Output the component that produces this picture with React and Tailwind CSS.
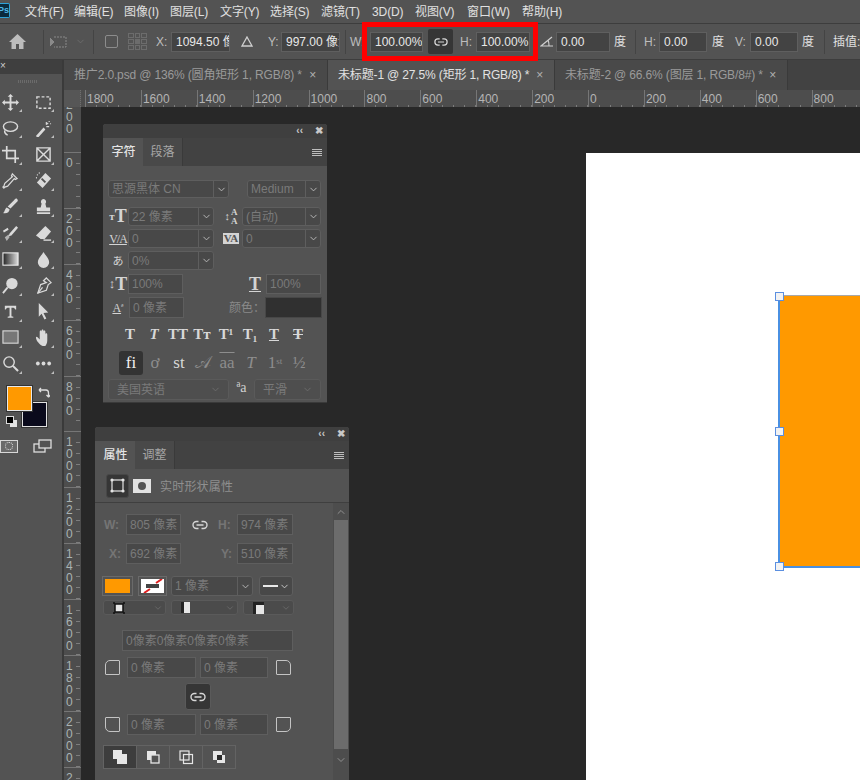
import { ChevronDown, ChevronUp } from 'lucide-react';

const MENUS = ['文件(F)', '编辑(E)', '图像(I)', '图层(L)', '文字(Y)', '选择(S)', '滤镜(T)', '3D(D)', '视图(V)', '窗口(W)', '帮助(H)'];
const MENU_W = ['w-[49px]', 'w-[50px]', 'w-[46px]', 'w-[50px]', 'w-[50px]', 'w-[51px]', 'w-[51px]', 'w-[43px]', 'w-[52px]', 'w-[55px]', 'w-[50px]'];

const H_RULER = ['1800', '1600', '1400', '1200', '1000', '800', '600', '400', '200', '0', '200', '400', '600', '800'];
const V_RULER = ['0', '200', '400', '600', '800', '1000', '1200', '1400', '1600', '1800', '2000', '2200'];

const stroke = { fill: 'none', stroke: 'currentColor', strokeWidth: 1.5 };

function Ico({ size = 18, children, className = '' }) {
  return <svg width={size} height={size} viewBox="0 0 18 18" className={className} fill="currentColor">{children}</svg>;
}

const TOOLS = [
  <path d="M9 0l3 3h-2v5h5V6l3 3-3 3v-2h-5v5h2l-3 3-3-3h2v-5H3v2L0 9l3-3v2h5V3H6z" />,
  <g {...stroke}><path strokeDasharray="3 2" d="M2 3h14v12H2z" /></g>,
  <g {...stroke}><ellipse cx="9" cy="7" rx="7.500" ry="5" /><path d="M3 11c-1 3 1 4 3 5" /></g>,
  <g><path d="M1 17l8-9 2 2-8 9z" /><path d="M12 2v3M14 3l-2 2M15 7h-3M15 1v1M17 4h-1" {...stroke} strokeWidth="1.2" /></g>,
  <g {...stroke} strokeWidth="1.8"><path d="M0 5h14v13M5 0v13h13" /></g>,
  <g {...stroke}><path d="M2 2h14v14H2zM2 2l14 14M16 2L2 16" /></g>,
  <g {...stroke} strokeWidth="1.3"><path d="M11 2l5 5-2 1-1-1-7 8-3 1-1 1-1-1 1-1 1-3 8-7-1-1z" /></g>,
  <g><path d="M11 1l6 6-9 10-6-6z" /><path d="M7 7l4 4" stroke="#535353" strokeWidth="2" /><path d="M2 3h1M4 1h1M1 6h1" {...stroke} /></g>,
  <path d="M16 1c1 1 1 2 0 3l-7 7-3-2 7-7c1-1 2-2 3-1zM5 10l3 2c0 3-3 5-7 4 2-1 2-5 4-6z" />,
  <path d="M9 1a3 3 0 0 1 2 5l1 4h4v4H2v-4h4l1-4a3 3 0 0 1 2-5zM2 15h14v2H2z" />,
  <g><path d="M15 1l2 2-7 8-3 1 1-3zM1 6l5-3 1 2-5 3z" /><path d="M3 13l4-3 1 3-3 4z" opacity=".7" /></g>,
  <g><path d="M11 1l6 6-7 8H6l-5-4z" /><path d="M1 11l5 4h4l-1 1H5z" fill="#535353" /><path d="M9 16h8" {...stroke} /></g>,
  <g><defs><linearGradient id="gr"><stop offset="0" stopColor="#222" /><stop offset="1" stopColor="#ddd" /></linearGradient></defs><rect x="1" y="2" width="16" height="13" fill="url(#gr)" stroke="#e8e8e8" strokeWidth="1.2" /></g>,
  <path d="M9 1c3 5 6 7 6 11a6 6 0 0 1-12 0c0-4 3-6 6-11z" />,
  <g><circle cx="10.500" cy="7" r="6" /><path d="M6 11l-5 6" {...stroke} strokeWidth="2" /></g>,
  <g {...stroke} strokeWidth="1.3"><path d="M12 1l5 5-3 2-2 6-9 3 3-9 6-2-3-2z" /><path d="M3 17l5-6" /></g>,
  <path d="M3 3h12v4h-1c-.5-1.500-1-2-3-2h-1v9l2 .5v1H6v-1l2-.5V5H7c-2 0-2.500.5-3 2H3z" />,
  <path d="M4 0l10 10-5 .5 3 6-2 1-3-6-3 3z" />,
  <rect x="1" y="2" width="16" height="13" fill="#777" stroke="#d8d8d8" strokeWidth="1.2" />,
  <path d="M6 17c-2-2-5-5-5-8 0-1 1-1 2 0l2 2V3c0-2 2-2 2 0v4V2c0-2 2-2 2 0v5-4c0-2 2-2 2 0v5-2c0-2 2-2 2 0v6c0 4-2 6-3 7z" />,
  <g {...stroke}><circle cx="7.500" cy="7.500" r="5.500" /><path d="M11.500 11.500L17 17" strokeWidth="2.2" /></g>,
  <g><circle cx="3" cy="9" r="2" /><circle cx="9" cy="9" r="2" /><circle cx="15" cy="9" r="2" /></g>,
];

const CHAR_STYLES = ['T', 'T', 'TT', 'Tт', 'T¹', 'T₁', 'T', 'T'];
const OPEN_TYPE = ['fi', 'ơ', 'st', '𝒜', 'aa', 'T', <span key="st">1<sup className="text-[9px]">st</sup></span>, '½'];

function Label({ children, className = '' }) {
  return <span className={`text-[12px] leading-none text-[#bdbdbd] shrink-0 ${className}`}>{children}</span>;
}

function OptInput({ children, className = '' }) {
  return (
    <div className={`h-[20px] bg-[#434343] border border-[#5f5f5f] px-[4px] text-[12px] leading-[18px] text-[#e8e8e8] overflow-hidden whitespace-nowrap shrink-0 ${className}`}>
      {children}
    </div>
  );
}

function Sep({ className = '' }) {
  return <div className={`w-px h-[24px] bg-[#444444] shrink-0 ${className}`} />;
}

// dim field used in both floating panels
function Field({ children, className = '', arrow = false, rounded = false, dimArrow = false }) {
  return (
    <div className={`flex h-full bg-[#484848] border border-[#5e5e5e] text-[12px] text-[#7a7a7a] whitespace-nowrap overflow-hidden shrink-0 ${rounded ? 'rounded-[3px]' : ''} ${className}`}>
      <span className="flex-1 px-[3px] flex items-center overflow-hidden">{children}</span>
      {arrow && (
        <span className={`w-[15px] flex items-center justify-center ${dimArrow ? 'text-[#6c6c6c]' : 'border-l border-[#5e5e5e] text-[#bdbdbd]'}`}>
          <ChevronDown size={11} />
        </span>
      )}
    </div>
  );
}

function PanelHead({ tabs }) {
  return (
    <>
      <div className="h-[14px] bg-[#3f3f3f] flex items-center justify-end gap-[12px] pr-[4px] text-[#c8c8c8] text-[10px] leading-none font-bold">
        <span>‹‹</span>
        <span>✖</span>
      </div>
      <div className="h-[28px] bg-[#424242] flex items-stretch">
        <div className="w-[40px] bg-[#535353] flex items-center justify-center text-[12px] text-[#e4e4e4] font-medium pl-[1px]">{tabs[0]}</div>
        <div className="w-[40px] bg-[#494949] border-r border-[#3a3a3a] flex items-center justify-center text-[12px] text-[#a6a6a6]">{tabs[1]}</div>
        <div className="flex-1 flex items-center justify-end pr-[5px]">
          <div className="w-[10px] flex flex-col gap-[1px]">
            <i className="block h-px bg-[#bdbdbd]" /><i className="block h-px bg-[#bdbdbd]" /><i className="block h-px bg-[#bdbdbd]" /><i className="block h-px bg-[#bdbdbd]" />
          </div>
        </div>
      </div>
    </>
  );
}

function CharIcon({ children, className = '' }) {
  return <span className={`w-[20px] shrink-0 flex items-center justify-center font-['Liberation_Serif',serif] font-bold text-[#d4d4d4] ${className}`}>{children}</span>;
}

function CharPanel() {
  return (
    <div className="absolute left-[103px] top-[124px] w-[224px] h-[279px] bg-[#535353] rounded-t-[3px] overflow-hidden border-b border-[#3a3a3a]">
      <PanelHead tabs={['字符', '段落']} />
      <div className="px-[5px] pt-[14px] flex flex-col">
        <div className="flex h-[18px] justify-between pr-[1px]">
          <Field arrow rounded className="w-[121px] text-[#6f6f6f]">思源黑体 CN</Field>
          <Field arrow rounded className="w-[74px]">Medium</Field>
        </div>
        <div className="flex h-[19px] mt-[9px]">
          <CharIcon className="text-[18px]"><span className="text-[11px]">т</span>T</CharIcon>
          <Field arrow rounded className="w-[86px]">22 像素</Field>
          <CharIcon className="ml-[7px] text-[9px] leading-[9px] text-center">
            <span className="text-[11px] mr-px font-normal">↕</span>
            <span>A<br />A</span>
          </CharIcon>
          <Field arrow rounded className="w-[79px] ml-[1px]">(自动)</Field>
        </div>
        <div className="flex h-[19px] mt-[3px]">
          <CharIcon className="text-[12px] font-['Liberation_Sans',sans-serif] font-normal tracking-[-1px]"><span className="underline">V/A</span></CharIcon>
          <Field arrow rounded className="w-[86px]">0</Field>
          <CharIcon className="ml-[7px] text-[11px] font-['Liberation_Sans',sans-serif]"><span className="bg-[#d4d4d4] text-[#535353] px-px leading-none">VA</span></CharIcon>
          <Field arrow rounded className="w-[79px] ml-[1px]">0</Field>
        </div>
        <div className="flex h-[19px] mt-[3px]">
          <CharIcon className="text-[11px] font-['Noto_Sans_CJK_JP',sans-serif] font-normal">あ</CharIcon>
          <Field arrow rounded className="w-[86px]">0%</Field>
        </div>
        <div className="flex h-[20px] mt-[4px]">
          <CharIcon className="text-[18px]"><span className="text-[13px] font-normal">↕</span>T</CharIcon>
          <Field className="w-[55px]">100%</Field>
          <CharIcon className="ml-[62px] text-[18px] underline">T</CharIcon>
          <Field className="w-[55px] ml-[1px]">100%</Field>
        </div>
        <div className="flex h-[21px] mt-[3px]">
          <CharIcon className="text-[12px] font-['Liberation_Sans',sans-serif] font-normal"><span className="underline">A</span><span className="text-[9px]">ª</span></CharIcon>
          <Field className="w-[55px] ml-[1px]">0 像素</Field>
          <span className="ml-[45px] w-[36px] text-[12px] text-[#8a8a8a] flex items-center whitespace-nowrap">颜色：</span>
          <div className="w-[57px] bg-[#303030] border border-[#474747]" />
        </div>
        <div className="flex h-[18px] mt-[7px] pl-[10px]">
          {CHAR_STYLES.map((t, i) => (
            <span key={i} className={`w-[24px] flex items-center justify-center font-['Liberation_Serif',serif] font-bold text-[15px] text-[#d8d8d8] ${i === 1 ? 'italic' : ''} ${i === 6 ? 'underline' : ''} ${i === 7 ? 'line-through' : ''}`}>{t}</span>
          ))}
        </div>
        <div className="flex h-[24px] mt-[8px] pl-[11px] items-center">
          {OPEN_TYPE.map((t, i) => (
            <span key={i} className={`w-[24px] h-[24px] flex items-center justify-center font-['Liberation_Serif',serif] text-[17px] ${i === 0 ? 'bg-[#333333] rounded-[3px] text-[#f0f0f0]' : i === 2 ? 'text-[#d8d8d8]' : 'text-[#8d8d8d]'} ${i === 4 ? 'overline' : ''} ${i === 5 ? 'italic' : ''}`}>{t}</span>
          ))}
        </div>
        <div className="flex h-[21px] mt-[4px]">
          <Field arrow dimArrow rounded className="w-[121px] !bg-[#4e4e4e] !border-[#5a5a5a] px-[5px]">美国英语</Field>
          <span className="w-[25px] text-center text-[14px] leading-[18px] text-[#d0d0d0] font-['Liberation_Serif',serif]">ªa</span>
          <Field arrow dimArrow rounded className="w-[67px] !bg-[#4e4e4e] !border-[#5a5a5a] px-[5px]">平滑</Field>
        </div>
      </div>
    </div>
  );
}

function Corner({ r }) {
  const cls = { tl: 'rounded-tl-[5px]', tr: 'rounded-tr-[5px]', bl: 'rounded-bl-[5px]', br: 'rounded-br-[5px]' }[r];
  return <div className={`w-[15px] h-[15px] border-[1.5px] border-[#c4c4c4] rounded-[1px] shrink-0 ${cls}`} />;
}

function LinkIcon({ size = 16 }) {
  return (
    <svg width={size} height={size} viewBox="0 0 16 16" fill="none" stroke="currentColor" strokeWidth="1.4">
      <path d="M6.500 4.500H4.500a3.500 3.500 0 0 0 0 7h2M9.500 4.500h2a3.500 3.500 0 0 1 0 7h-2M4.500 8h7" />
    </svg>
  );
}

function PropsPanel() {
  return (
    <div className="absolute left-[95px] top-[427px] w-[254px] h-[353px] bg-[#535353] rounded-t-[3px] overflow-hidden">
      <PanelHead tabs={['属性', '调整']} />
      <div className="h-[34px] flex items-center pl-[11px] border-b border-[#3f3f3f]">
        <div className="w-[23px] h-[24px] bg-[#363636] rounded-[3px] border border-[#474747] flex items-center justify-center">
          <svg width="15" height="15" viewBox="0 0 15 15" fill="none" stroke="#e4e4e4" strokeWidth="1.2">
            <rect x="2" y="2" width="11" height="11" />
            <g fill="#e4e4e4" stroke="none"><circle cx="2" cy="2" r="1.600" /><circle cx="13" cy="2" r="1.600" /><circle cx="2" cy="13" r="1.600" /><circle cx="13" cy="13" r="1.600" /></g>
          </svg>
        </div>
        <div className="w-[18px] h-[14px] ml-[4px] bg-[#e2e2e2] flex items-center justify-center">
          <i className="block w-[8px] h-[8px] rounded-full bg-[#535353]" />
        </div>
        <span className="ml-[9px] mt-[3px] text-[12px] text-[#8f8f8f] tracking-[0.2px]">实时形状属性</span>
      </div>
      <div className="flex h-[277px]">
        <div className="w-[237px] shrink-0 pl-[7px] pt-[11px] flex flex-col">
          <div className="flex h-[21px] items-center">
            <span className="w-[24px] pl-[2px] text-[12px] font-bold text-[#757575]">W:</span>
            <Field className="w-[55px]">805 像素</Field>
            <span className="w-[37px] flex justify-center text-[#d6d6d6]"><LinkIcon /></span>
            <span className="w-[19px] text-[12px] font-bold text-[#757575]">H:</span>
            <Field className="w-[56px]">974 像素</Field>
          </div>
          <div className="flex h-[21px] mt-[8px] items-center">
            <span className="w-[24px] pl-[7px] text-[12px] font-bold text-[#757575]">X:</span>
            <Field className="w-[55px]">692 像素</Field>
            <span className="w-[37px]" />
            <span className="w-[19px] pl-[3px] text-[12px] font-bold text-[#757575]">Y:</span>
            <Field className="w-[56px]">510 像素</Field>
          </div>
          <div className="flex h-[20px] mt-[12px]">
            <div className="w-[31px] border border-[#6a6a6a] p-[2px]"><div className="w-full h-full bg-[#ff9900]" /></div>
            <div className="w-[29px] ml-[5px] border border-[#6a6a6a] p-[2px]">
              <svg className="block w-full h-full bg-white" viewBox="0 0 23 14">
                <path d="M3 14L9 10M15 4L21 0" stroke="#e02020" strokeWidth="2" />
                <rect x="5" y="5" width="13" height="4" fill="#444444" />
              </svg>
            </div>
            <Field arrow rounded className="w-[82px] ml-[4px]">1 像素</Field>
            <div className="w-[34px] ml-[6px] bg-[#484848] border border-[#5e5e5e] rounded-[3px] flex items-center justify-center gap-[1px] text-[#d0d0d0]">
              <i className="block w-[15px] h-[2px] bg-[#e8e8e8]" />
              <ChevronDown size={11} />
            </div>
          </div>
          <div className="flex h-[15px] mt-[4px] ml-[1px] gap-[5px]">
            {['w-[63px]', 'w-[67px]', 'w-[51px]'].map((w, i) => (
              <div key={w} className={`${w} pl-[9px] bg-[#4b4b4b] border border-[#5a5a5a] rounded-[3px] flex items-center justify-between pr-[2px] text-[#6c6c6c] shrink-0`}>
                {i === 0 && (
                  <svg width="12" height="12" viewBox="0 0 12 12" fill="#e6e6e6" stroke="#111111" strokeWidth="1.500">
                    <rect x="2" y="2" width="8" height="8" />
                    <path d="M0 1h2M10 1h2M0 11h2M10 11h2" />
                  </svg>
                )}
                {i === 1 && <i className="block w-[9px] h-[11px] bg-[#e6e6e6] border-l-[3px] border-l-[#222222]" />}
                {i === 2 && <i className="block w-[11px] h-[12px] bg-[#e6e6e6] border-l-[3px] border-t-[3px] border-[#222222]" />}
                <ChevronDown size={10} />
              </div>
            ))}
          </div>
          <div className="h-[21px] mt-[15px] ml-[20px]">
            <Field className="w-[171px]">0像素0像素0像素0像素</Field>
          </div>
          <div className="flex h-[21px] mt-[6px] items-center">
            <span className="w-[3px]" />
            <Corner r="tl" />
            <Field className="w-[69px] ml-[7px]">0 像素</Field>
            <Field className="w-[68px] ml-[4px]">0 像素</Field>
            <span className="w-[8px]" />
            <Corner r="tr" />
          </div>
          <div className="h-[27px] mt-[5px] ml-[83px]">
            <div className="w-[26px] h-[27px] bg-[#363636] rounded-[3px] border border-[#5a5a5a] flex items-center justify-center text-[#d8d8d8]"><LinkIcon /></div>
          </div>
          <div className="flex h-[21px] mt-[4px] items-center">
            <span className="w-[3px]" />
            <Corner r="bl" />
            <Field className="w-[69px] ml-[7px]">0 像素</Field>
            <Field className="w-[68px] ml-[4px]">0 像素</Field>
            <span className="w-[8px]" />
            <Corner r="br" />
          </div>
          <div className="flex h-[24px] mt-[10px] ml-[1px] w-[133px] border border-[#636363]">
            {[0, 1, 2, 3].map(i => (
              <div key={i} className={`flex-1 flex items-center justify-center ${i > 0 ? 'border-l border-[#636363]' : 'bg-[#3d3d3d]'}`}>
                <svg width="16" height="16" viewBox="0 0 16 16">
                  {i === 0 && <path fill="#e6e6e6" d="M1 1h9v4h5v10H5v-5H1z" />}
                  {i === 1 && <g><rect x="2" y="2" width="9" height="9" fill="#e6e6e6" /><rect x="6" y="6" width="8" height="8" fill="#535353" stroke="#e6e6e6" strokeWidth="1.3" /></g>}
                  {i === 2 && <g fill="none" stroke="#e6e6e6" strokeWidth="1.2"><rect x="2" y="2" width="9" height="9" /><rect x="5.500" y="5.500" width="9" height="9" /></g>}
                  {i === 3 && <g><rect x="2" y="2" width="9" height="9" fill="#e6e6e6" /><rect x="6" y="6" width="8" height="8" fill="#e6e6e6" /><rect x="6" y="6" width="5" height="5" fill="#2a2a2a" /></g>}
                </svg>
              </div>
            ))}
          </div>
        </div>
        <div className="w-[16px] ml-[1px] flex flex-col bg-[#4d4d4d]">
          <div className="h-[17px] flex items-center justify-center text-[#8f8f8f]"><ChevronUp size={12} /></div>
          <div className="h-[229px] mx-px bg-[#6c6c6c]" />
          <div className="h-[21px] flex items-center justify-center text-[#8f8f8f]"><ChevronDown size={12} /></div>
        </div>
      </div>
    </div>
  );
}

function Toolbar() {
  return (
    <div className="w-[62px] shrink-0 bg-[#535353] flex flex-col">
      <div className="h-[14px] bg-[#3f3f3f] text-[10px] leading-[12px] text-[#cfcfcf]">×</div>
      <div className="h-[15px] flex items-center justify-center">
        <i className="block w-[20px] h-[3px] mr-[6px] bg-[repeating-linear-gradient(90deg,#6b6b6b_0,#6b6b6b_1px,transparent_1px,transparent_2px)]" />
      </div>
      <div className="grid grid-cols-[20px_32px] gap-x-[7px] text-[#dadada]">
        {TOOLS.map((t, i) => (
          <div key={i} className="relative h-[26.2px] flex items-center justify-center">
            <Ico size={17}>{t}</Ico>
            <i className={`absolute bottom-[3px] w-0 h-0 border-l-[3px] border-l-transparent border-b-[3px] border-b-[#bdbdbd] ${i % 2 ? 'right-[5px]' : '-right-[2px]'}`} />
          </div>
        ))}
      </div>
      {/* colour swatches */}
      <div className="relative h-[49px] mt-[8px]">
        <div className="absolute left-[22px] top-[17px] w-[25px] h-[25px] bg-[#0a0a1c] border border-[#e0e0e0] outline outline-1 outline-[#333333]" />
        <div className="absolute left-[7px] top-[1px] w-[25px] h-[25px] bg-[#ff9900] border border-[#e8e8e8] outline outline-1 outline-[#333333]" />
        <svg className="absolute left-[38px] top-[2px] text-[#dedede]" width="12" height="12" viewBox="0 0 12 12" fill="none" stroke="currentColor" strokeWidth="1.3"><path d="M1 3h7c2 0 2.500 1 2.500 3v4M1 3l2-2M1 3l2 2M10.500 10l-2-2M10.500 10l2-2" /></svg>
        <div className="absolute left-[10px] top-[35px] w-[7px] h-[7px] bg-[#e4e4e4]" />
        <div className="absolute left-[6px] top-[31px] w-[8px] h-[8px] bg-black border border-[#dddddd]" />
      </div>
      <div className="flex items-center mt-[2px] h-[20px] text-[#dedede]">
        <div className="w-[18px] h-[13px] bg-[#6a6a6a] border border-[#d8d8d8] flex items-center justify-center">
          <i className="block w-[8px] h-[8px] rounded-full border border-dotted border-[#e8e8e8]" />
        </div>
        <svg className="ml-[15px]" width="19" height="14" viewBox="0 0 19 14" fill="none" stroke="currentColor" strokeWidth="1.3"><rect x="1" y="5" width="11" height="8" /><rect x="6" y="1" width="12" height="8" fill="#535353" /></svg>
      </div>
    </div>
  );
}

function HRuler() {
  return (
    <div className="h-[17px] flex bg-[#4d4d4d] overflow-hidden shrink-0">
      <div className="w-[17px] shrink-0 border-r border-dotted border-[#6e6e6e] bg-[#565656]" />
      <div className="flex pl-[4px]">
        {H_RULER.map((n, i) => (
          <div key={i} className="w-[55.9px] shrink-0 border-l border-[#767676] pl-[1px] text-[12px] leading-[18px] text-[#b4b4b4] bg-[repeating-linear-gradient(90deg,transparent_0,transparent_10px,#7d7d7d_10px,#7d7d7d_11px)] bg-[length:100%_2px] bg-bottom bg-no-repeat">
            {n}
          </div>
        ))}
      </div>
    </div>
  );
}

function VRuler() {
  return (
    <div className="w-[17px] shrink-0 bg-[#4d4d4d] overflow-hidden">
      <div className="-mt-[10px]">
        <div className="h-[56px] relative border-b border-[#767676]">
          <div className="absolute left-[2px] top-[2px] text-[12px] leading-[12px] text-[#a9b3b3] w-[8px]">
            <div>2</div><div>0</div><div>0</div>
          </div>
        </div>
        {V_RULER.map((n, i) => (
          <div key={i} className="h-[55.9px] border-b border-[#767676] pl-[2px] pt-[4px] text-[12px] leading-[12px] text-[#a9b3b3] bg-[repeating-linear-gradient(180deg,transparent_0,transparent_10px,#7d7d7d_10px,#7d7d7d_11px)] bg-[length:4px_100%] bg-[position:12px_0] bg-no-repeat overflow-hidden">
            {n.split('').map((d, j) => <div key={j}>{d}</div>)}
          </div>
        ))}
      </div>
    </div>
  );
}

function Tab({ title, active, w }) {
  return (
    <div className={`${w} shrink-0 flex items-center justify-between pl-[10px] pr-[11px] text-[12px] tracking-[-0.15px] whitespace-nowrap border-r border-[#3a3a3a] ${active ? 'bg-[#535353] text-[#e2e2e2]' : 'bg-[#494949] text-[#9a9a9a]'}`}>
      <span>{title}</span>
      <span className="text-[#b0b0b0]">×</span>
    </div>
  );
}

export default function App() {
  return (
    <div className="relative w-[860px] h-[780px] overflow-hidden bg-[#535353] flex flex-col font-['Liberation_Sans','Noto_Sans_CJK_SC',sans-serif]">
      {/* menu bar */}
      <div className="h-[24px] shrink-0 flex items-center border-b border-[#3d3d3d]">
        <div className="w-[10px] h-[15px] bg-[#0b2a3d] border border-[#2fa3d8] border-l-0 rounded-r-[2px] flex justify-end text-[9px] leading-[13px] font-bold text-[#4fb8e8] overflow-hidden -mt-[2px] shrink-0">Ps</div>
        <div className="flex text-[12px] text-[#e0e0e0] tracking-[-0.1px]">
          {MENUS.map((m, i) => (
            <span key={m} className={`whitespace-nowrap ${i === 0 ? 'ml-[15px]' : ''} ${MENU_W[i]}`}>{m}</span>
          ))}
        </div>
      </div>
      {/* options bar */}
      <div className="h-[36px] shrink-0 flex items-center border-b border-[#3d3d3d]">
        <svg className="ml-[9px] shrink-0 text-[#bcbcbc]" width="17" height="15" viewBox="0 0 17 15" fill="currentColor"><path d="M8.500 0L17 8h-2.500v7H10v-5H7v5H2.500V8H0z" /></svg>
        <Sep className="ml-[17px]" />
        <svg className="ml-[6px] shrink-0 text-[#8a8a8a]" width="18" height="14" viewBox="0 0 18 14" fill="none" stroke="currentColor"><path d="M4 2h12v10H4" strokeDasharray="2 1" /><path d="M0 3l4 4-4 4z" fill="currentColor" /></svg>
        <ChevronDown size={11} className="ml-[7px] shrink-0 text-[#6c6c6c]" />
        <Sep className="ml-[7px]" />
        <div className="ml-[11px] w-[13px] h-[13px] rounded-[2px] border border-[#8c8c8c] shrink-0" />
        <div className="ml-[10px] w-[19px] grid grid-cols-3 gap-[1px] shrink-0">
          {[0, 1, 2, 3, 4, 5, 6, 7, 8].map(i => <i key={i} className={`block h-[5px] border border-[#6c6c6c] ${i === 4 ? 'bg-[#6c6c6c]' : ''}`} />)}
        </div>
        <Label className="ml-[9px] w-[15px]">X:</Label>
        <OptInput className="w-[59px]">1094.50 像素</OptInput>
        <svg className="ml-[11px] shrink-0 text-[#cfcfcf]" width="12" height="11" viewBox="0 0 12 11" fill="none" stroke="currentColor" strokeWidth="1.3"><path d="M6 1l5 9H1z" /></svg>
        <Label className="ml-[15px] w-[13px]">Y:</Label>
        <OptInput className="w-[59px]">997.00 像素</OptInput>
        <Sep className="ml-[5px]" />
        <Label className="ml-[4px] w-[20px] text-[#8f8f8f]">W:</Label>
        <OptInput className="w-[53px]">100.00%</OptInput>
        <div className="ml-[5px] w-[25px] h-[25px] bg-[#363636] rounded-[2px] flex items-center justify-center text-[#d8d8d8] shrink-0"><LinkIcon size={14} /></div>
        <Label className="ml-[7px] w-[16px]">H:</Label>
        <OptInput className="w-[54px]">100.00%</OptInput>
        <svg className="ml-[10px] shrink-0 text-[#cfcfcf]" width="13" height="11" viewBox="0 0 13 11" fill="none" stroke="currentColor" strokeWidth="1.2"><path d="M12 1L1 10h12M8 4c1 2 1 4 1 6" /></svg>
        <OptInput className="w-[54px] ml-[3px]">0.00</OptInput>
        <Label className="ml-[4px] w-[16px] text-[#e0e0e0]">度</Label>
        <Sep className="ml-[5px]" />
        <Label className="ml-[8px] w-[15px]">H:</Label>
        <OptInput className="w-[48px]">0.00</OptInput>
        <Label className="ml-[5px] w-[23px] text-[#e0e0e0]">度</Label>
        <Label className="w-[15px]">V:</Label>
        <OptInput className="w-[48px]">0.00</OptInput>
        <Label className="ml-[4px] w-[16px] text-[#e0e0e0]">度</Label>
        <Sep className="ml-[6px]" />
        <Label className="ml-[8px] whitespace-nowrap text-[#e0e0e0]">插值:</Label>
      </div>
      {/* work area */}
      <div className="flex-1 flex min-h-0">
        <Toolbar />
        <div className="w-[2px] shrink-0 bg-[#3a3a3a]" />
        <div className="flex-1 flex flex-col min-w-0">
          <div className="h-[30px] shrink-0 flex bg-[#424242] overflow-hidden">
            <Tab w="w-[264px]" title="推广2.0.psd @ 136% (圆角矩形 1, RGB/8) *" />
            <Tab w="w-[227px]" active title="未标题-1 @ 27.5% (矩形 1, RGB/8) *" />
            <Tab w="w-[233px]" title="未标题-2 @ 66.6% (图层 1, RGB/8#) *" />
          </div>
          <HRuler />
          <div className="flex-1 flex min-h-0">
            <VRuler />
            <div className="flex-1 relative bg-[#282828] overflow-hidden">
              <div className="absolute left-[505px] top-[46px] w-[274px] h-[627px] bg-white" />
              <div className="absolute left-[697px] top-[188px] w-[90px] h-[273px] bg-[#ff9900] border-2 border-[#4a90e2] border-r-0 border-t-[#a8a8a8] border-t-[1px]" />
              <div className="absolute left-[694px] top-[185px] w-[9px] h-[9px] bg-[#f2f2f2] border border-[#5b8fe0]" />
              <div className="absolute left-[694px] top-[320px] w-[9px] h-[9px] bg-[#f2f2f2] border border-[#5b8fe0]" />
              <div className="absolute left-[694px] top-[455px] w-[9px] h-[9px] bg-[#f2f2f2] border border-[#5b8fe0]" />
            </div>
          </div>
        </div>
      </div>
      <CharPanel />
      <PropsPanel />
      {/* annotation box */}
      <div className="absolute left-[362px] top-[22px] w-[176px] h-[39px] border-[5px] border-[#ff0000]" />
    </div>
  );
}
